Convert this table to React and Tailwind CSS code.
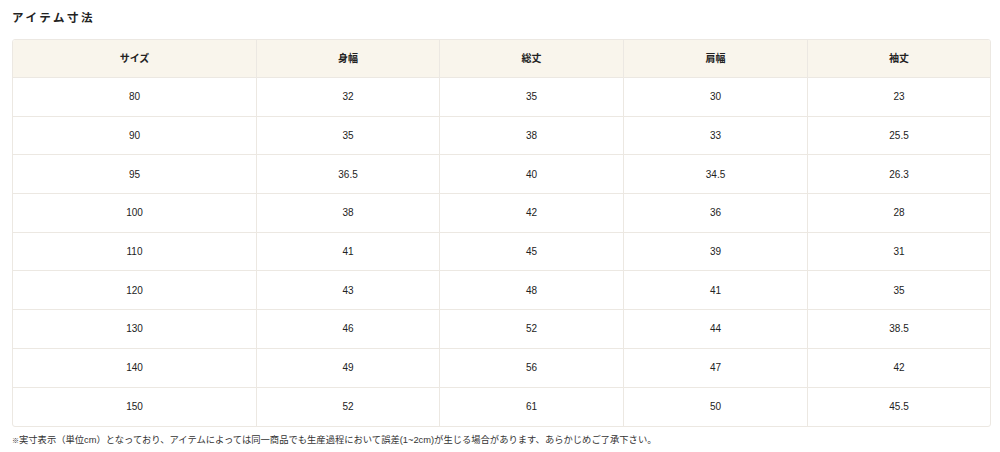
import React from 'react'

const headers = ['サイズ', '身幅', '総丈', '肩幅', '袖丈']

const rows = [
  ['80', '32', '35', '30', '23'],
  ['90', '35', '38', '33', '25.5'],
  ['95', '36.5', '40', '34.5', '26.3'],
  ['100', '38', '42', '36', '28'],
  ['110', '41', '45', '39', '31'],
  ['120', '43', '48', '41', '35'],
  ['130', '46', '52', '44', '38.5'],
  ['140', '49', '56', '47', '42'],
  ['150', '52', '61', '50', '45.5'],
]

const font = { fontFamily: '"Liberation Sans", "Noto Sans CJK JP", sans-serif' }

export default function App() {
  return (
    <div className="w-[1000px] h-[452px] bg-white text-[#222] px-3" style={font}>
      <h2 className="pt-[10px] h-[39px] text-[11.5px] font-bold tracking-[0.22em] leading-[16px]">
        アイテム寸法
      </h2>

      <div className="w-[979px] border border-[#ece8e2] rounded-[3px] overflow-hidden">
        <div className="grid grid-cols-[243px_183px_184px_184px_1fr] bg-[#f9f5ec] h-[38px] border-b border-[#ece8e2]">
          {headers.map((h, i) => (
            <div
              key={h}
              className={`flex items-center justify-center text-[10px] font-bold ${i > 0 ? 'border-l border-[#ece8e2]' : ''}`}
            >
              {h}
            </div>
          ))}
        </div>
        {rows.map((row, r) => (
          <div
            key={r}
            className={`grid grid-cols-[243px_183px_184px_184px_1fr] h-[38.7px] ${r < rows.length - 1 ? 'border-b border-[#ece8e2]' : ''}`}
          >
            {row.map((cell, i) => (
              <div
                key={i}
                className={`flex items-center justify-center text-[10px] ${i > 0 ? 'border-l border-[#ece8e2]' : ''}`}
              >
                {cell}
              </div>
            ))}
          </div>
        ))}
      </div>

      <p className="mt-[7px] text-[9.3px] leading-[12px] text-[#333]">
        <span className="text-[7px]">※</span>実寸表示（単位cm）となっており、アイテムによっては同一商品でも生産過程において誤差(1~2cm)が生じる場合があります、あらかじめご了承下さい。
      </p>
    </div>
  )
}
